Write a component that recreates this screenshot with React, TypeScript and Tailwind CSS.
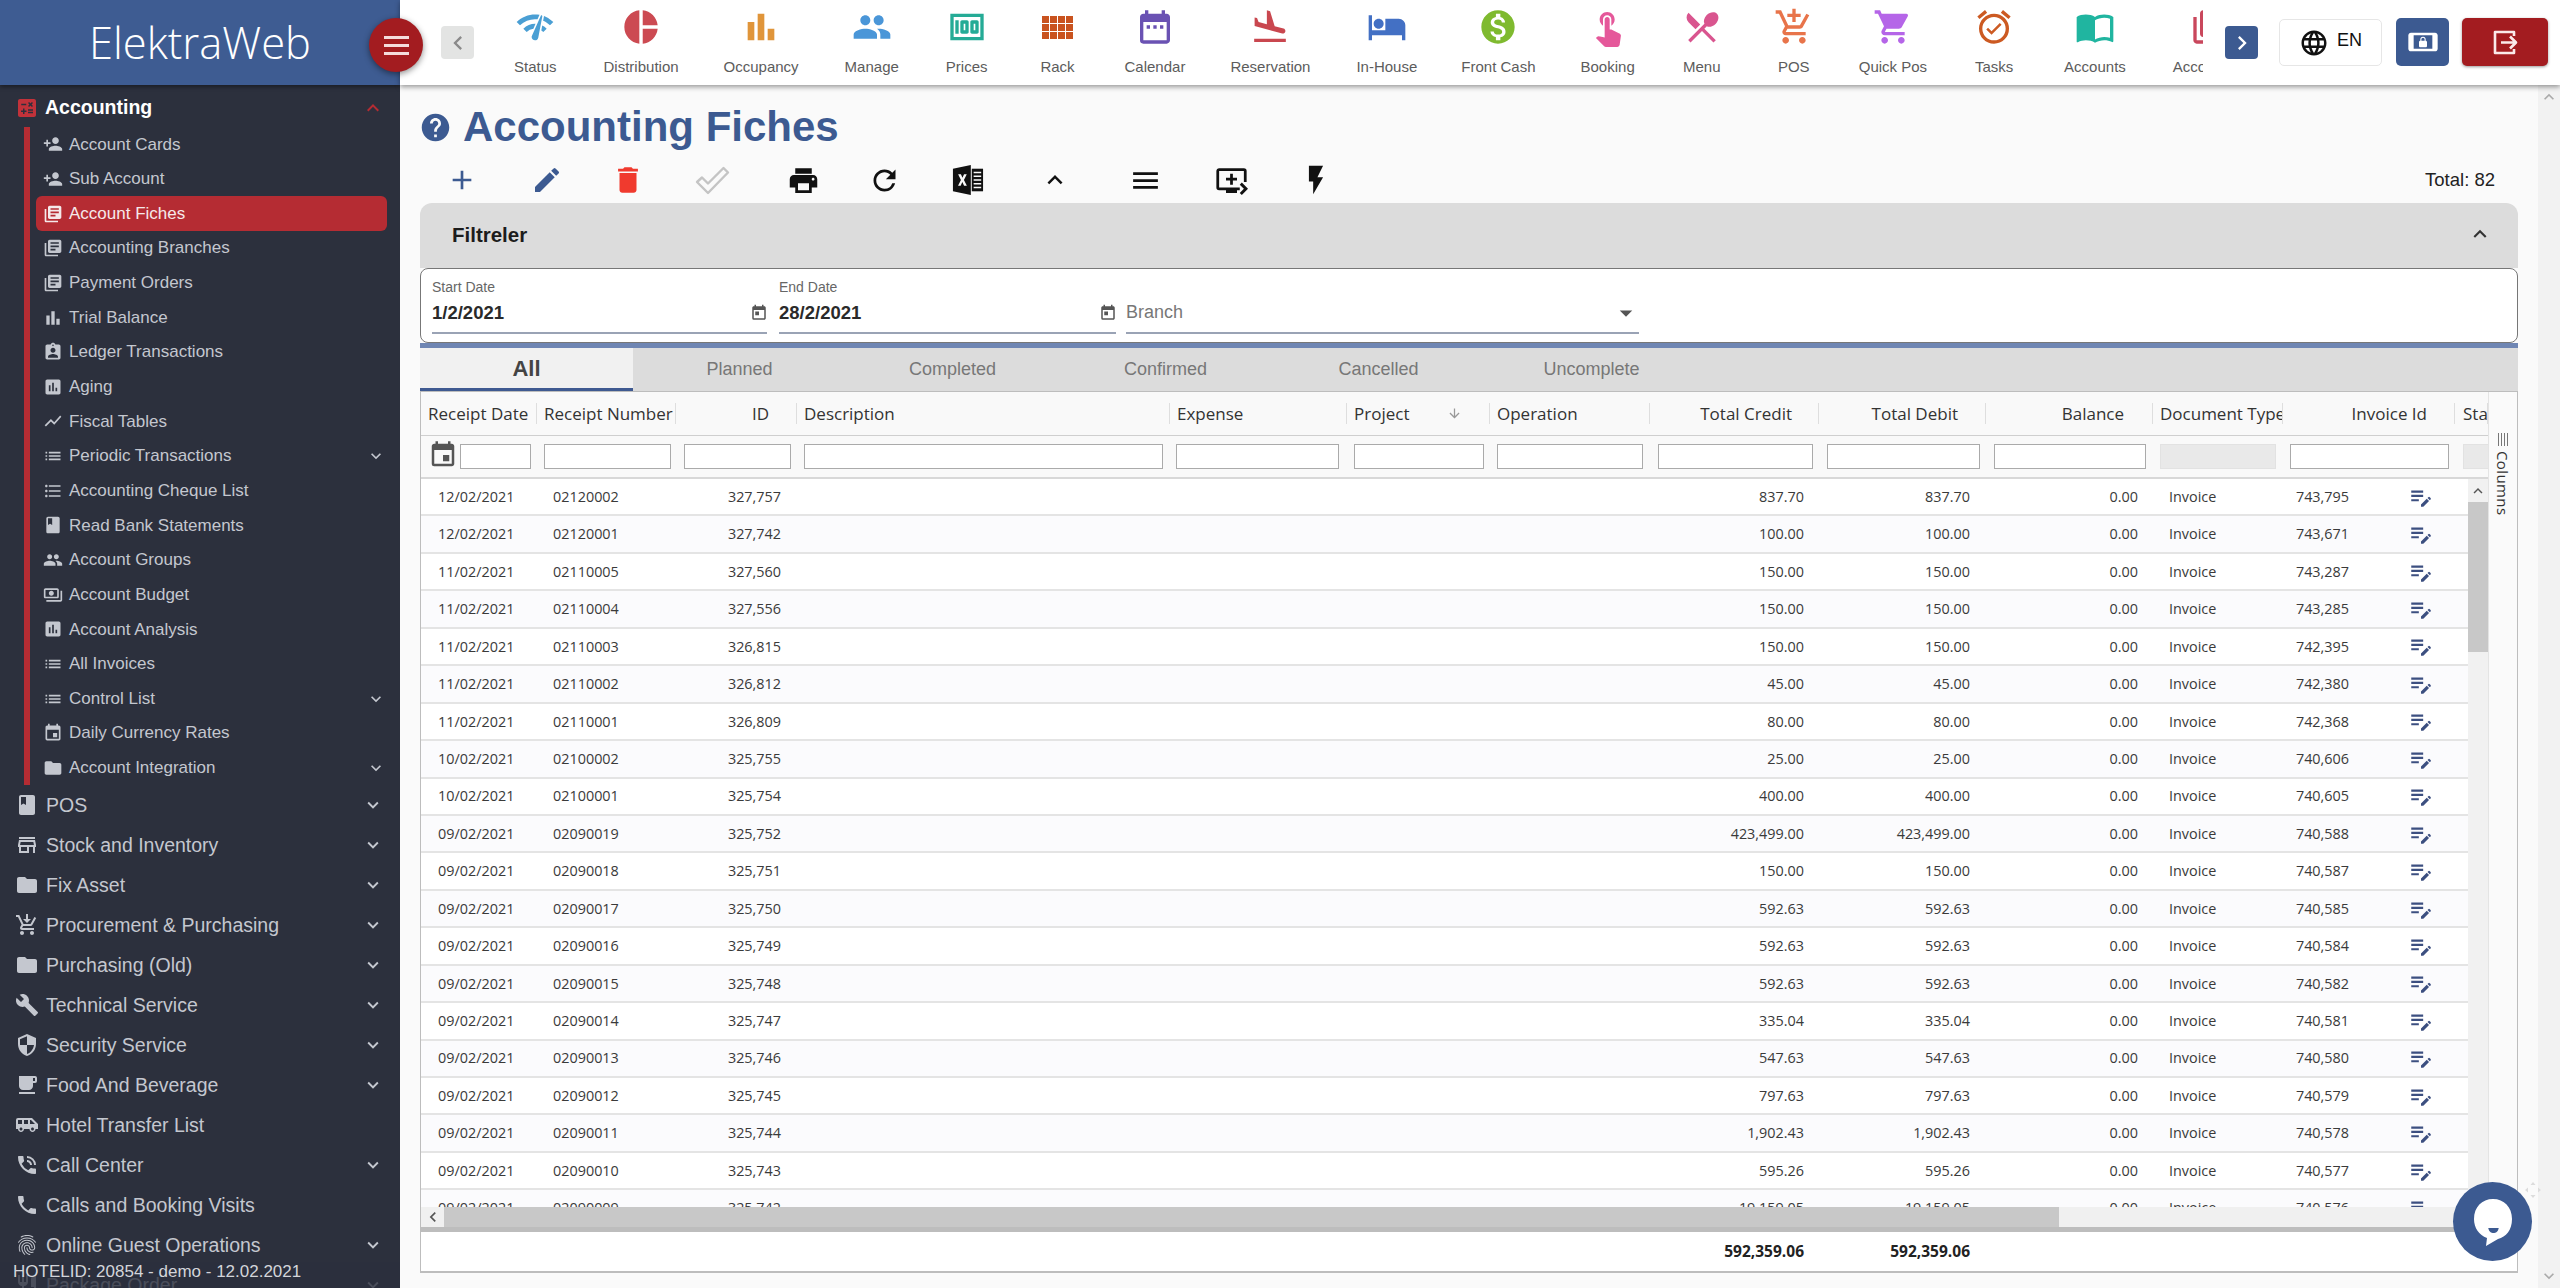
import React from "react";
import {
  MdNetworkCheck, MdPieChart, MdBarChart, MdPeople, MdMoney, MdDateRange, MdFlightLand, MdHotel,
  MdMonetizationOn, MdTouchApp, MdRestaurantMenu, MdOutlineAddShoppingCart, MdShoppingCart, MdAlarmOn, MdImportContacts,
  MdLibraryBooks, MdChevronLeft, MdChevronRight, MdLanguage, MdScreenLockLandscape, MdCalculate, MdExpandLess, MdExpandMore,
  MdPersonAdd, MdAssignmentInd, MdAssessment, MdShowChart, MdList, MdFormatListBulleted, MdBook, MdOutlinePayments, MdEvent,
  MdToday, MdFolder, MdOutlineStore, MdBuild, MdSecurity, MdLocalCafe, MdAirportShuttle, MdPhoneInTalk, MdPhone, MdFingerprint,
  MdAdd, MdEdit, MdDelete, MdPrint, MdRefresh, MdKeyboardArrowUp, MdMenu, MdQueuePlayNext, MdFlashOn, MdHelp,
  MdArrowDropDown, MdArrowDownward, MdEditNote, MdKeyboardArrowDown, MdOutlineRestaurant,
} from "react-icons/md";

const RackIcon = ({ size = 40, className }: { size?: number; className?: string }) => (
  <svg width={size} height={size} viewBox="0 0 40 40" fill="currentColor" className={className}>
    {[0, 1, 2, 3].map((i) =>
      [0, 1, 2].map((j) => <rect key={`${i}-${j}`} x={4 + 8 * i} y={9 + 8 * j} width="7" height="7" />)
    )}
  </svg>
);

const top = [
  { l: "Status", I: MdNetworkCheck, c: "text-[#4a9fd4]", o: "" },
  { l: "Distribution", I: MdPieChart, c: "text-[#cc4a52]", o: "" },
  { l: "Occupancy", I: MdBarChart, c: "text-[#e0953a]", o: "ml-[-2px]" },
  { l: "Manage", I: MdPeople, c: "text-[#4a96d8]", o: "ml-[-1px]" },
  { l: "Prices", I: MdMoney, c: "text-[#25ab96]", o: "" },
  { l: "Rack", I: RackIcon, c: "text-[#c9531f]", o: "ml-[3px]" },
  { l: "Calendar", I: MdDateRange, c: "text-[#6a52b3]", o: "" },
  { l: "Reservation", I: MdFlightLand, c: "text-[#c9474f]", o: "ml-[-2px]" },
  { l: "In-House", I: MdHotel, c: "text-[#4370c4]", o: "ml-[-1px]" },
  { l: "Front Cash", I: MdMonetizationOn, c: "text-[#7fba2f]", o: "ml-[-3px]" },
  { l: "Booking", I: MdTouchApp, c: "text-[#e5589a]", o: "ml-[-2px]" },
  { l: "Menu", I: MdRestaurantMenu, c: "text-[#d9558f]", o: "" },
  { l: "POS", I: MdOutlineAddShoppingCart, c: "text-[#e8744a]", o: "ml-[5px]" },
  { l: "Quick Pos", I: MdShoppingCart, c: "text-[#b565e8]", o: "ml-[-2px]" },
  { l: "Tasks", I: MdAlarmOn, c: "text-[#cc5a22]", o: "" },
  { l: "Accounts", I: MdImportContacts, c: "text-[#20b5a0]", o: "ml-[3px]" },
  { l: "Accounting", I: MdLibraryBooks, c: "text-[#c9475c]", o: "" },
];

const CartDown = ({ size = 24 }: { size?: number; className?: string }) => (
  <svg width={size} height={size} viewBox="0 0 24 24" fill="currentColor">
    <path d="M11 1h2v5h3l-4 4-4-4h3zM7 18c-1.1 0-1.99.9-1.99 2S5.9 22 7 22s2-.9 2-2-.9-2-2-2zm10 0c-1.1 0-1.99.9-1.99 2s.89 2 1.99 2 2-.9 2-2-.9-2-2-2zm-9.83-3.25l.03-.12.9-1.63h7.45c.75 0 1.41-.41 1.75-1.03l3.86-7.01L19.42 4h-.01l-1.1 2-2.76 5H8.53l-.13-.27L6.16 6l-.95-2-.94-2H1v2h2l3.6 7.59-1.35 2.45c-.16.28-.25.61-.25.96 0 1.1.9 2 2 2h12v-2H7.42c-.13 0-.25-.11-.25-.25z" />
  </svg>
);

const ExcelIcon = ({ size = 34 }: { size?: number }) => (
  <svg width={size} height={size} viewBox="0 0 34 34" fill="currentColor">
    <path d="M1 5 20 1v32L1 29z" />
    <path d="M21 5h12v24H21z" />
    <path d="M6.5 11h3l1.6 3.6L12.8 11h2.9l-3 6 3.1 6h-3l-1.8-3.8L9.2 23H6.4l3.1-6z" fill="#fafafa" />
    <path d="M23 9h8M23 13h8M23 17h8M23 21h8M23 25h8" stroke="#fafafa" strokeWidth="1.6" />
  </svg>
);

const CheckOutline = ({ size = 36 }: { size?: number }) => (
  <svg width={size} height={size} viewBox="0 0 36 36" fill="none" stroke="currentColor" strokeWidth="2.4" strokeLinejoin="round">
    <path d="M3 20l5-4.5 6 6L29.5 6 34 10.5 14 31z" />
  </svg>
);

const sub = [
  { l: "Account Cards", I: MdPersonAdd },
  { l: "Sub Account", I: MdPersonAdd },
  { l: "Account Fiches", I: MdLibraryBooks, a: true },
  { l: "Accounting Branches", I: MdLibraryBooks },
  { l: "Payment Orders", I: MdLibraryBooks },
  { l: "Trial Balance", I: MdBarChart },
  { l: "Ledger Transactions", I: MdAssignmentInd },
  { l: "Aging", I: MdAssessment },
  { l: "Fiscal Tables", I: MdShowChart },
  { l: "Periodic Transactions", I: MdList, m: true },
  { l: "Accounting Cheque List", I: MdFormatListBulleted },
  { l: "Read Bank Statements", I: MdBook },
  { l: "Account Groups", I: MdPeople },
  { l: "Account Budget", I: MdOutlinePayments },
  { l: "Account Analysis", I: MdAssessment },
  { l: "All Invoices", I: MdList },
  { l: "Control List", I: MdList, m: true },
  { l: "Daily Currency Rates", I: MdEvent },
  { l: "Account Integration", I: MdFolder, m: true },
];

const mods = [
  { l: "POS", I: MdBook, m: true },
  { l: "Stock and Inventory", I: MdOutlineStore, m: true },
  { l: "Fix Asset", I: MdFolder, m: true },
  { l: "Procurement & Purchasing", I: CartDown, m: true },
  { l: "Purchasing (Old)", I: MdFolder, m: true },
  { l: "Technical Service", I: MdBuild, m: true },
  { l: "Security Service", I: MdSecurity, m: true },
  { l: "Food And Beverage", I: MdLocalCafe, m: true },
  { l: "Hotel Transfer List", I: MdAirportShuttle },
  { l: "Call Center", I: MdPhoneInTalk, m: true },
  { l: "Calls and Booking Visits", I: MdPhone },
  { l: "Online Guest Operations", I: MdFingerprint, m: true },
  { l: "Package Order", I: MdOutlineRestaurant, m: true },
];

const tools = [
  { I: MdAdd, s: 32, c: "text-[#3c5a91] ml-[22px]" },
  { I: MdEdit, s: 32, c: "text-[#3c5a91] ml-[45px]" },
  { I: MdDelete, s: 34, c: "text-[#f03a2e] ml-[41px]" },
  { I: CheckOutline, s: 36, c: "text-[#c4c4c4] ml-[44px]" },
  { I: MdPrint, s: 33, c: "text-[#111] ml-[51px]" },
  { I: MdRefresh, s: 33, c: "text-[#111] ml-[41px]" },
  { I: ExcelIcon, s: 32, c: "text-[#111] ml-[44px]" },
  { I: MdKeyboardArrowUp, s: 30, c: "text-[#111] ml-[47px]" },
  { I: MdMenu, s: 33, c: "text-[#111] ml-[50px]" },
  { I: MdQueuePlayNext, s: 33, c: "text-[#111] ml-[46px]" },
  { I: MdFlashOn, s: 34, c: "text-[#111] ml-[45px]" },
];

const tabs = ["All", "Planned", "Completed", "Confirmed", "Cancelled", "Uncomplete"];

const COLS = "grid-cols-[116px_139px_121px_373px_177px_143px_160px_169px_167px_167px_130px_172px_33px]";

const head = [
  { t: "Receipt Date", c: "pl-[7px]" },
  { t: "Receipt Number", c: "pl-[7px]" },
  { t: "ID", c: "justify-end pr-[27px]" },
  { t: "Description", c: "pl-[7px]" },
  { t: "Expense", c: "pl-[7px]" },
  { t: "Project", c: "pl-[7px]" },
  { t: "Operation", c: "pl-[7px]" },
  { t: "Total Credit", c: "justify-end pr-[26px]" },
  { t: "Total Debit", c: "justify-end pr-[27px]" },
  { t: "Balance", c: "justify-end pr-[28px]" },
  { t: "Document Type", c: "pl-[7px]" },
  { t: "Invoice Id", c: "justify-end pr-[27px]" },
  { t: "Status", c: "pl-[8px]" },
];

const filters = [
  { c: "ml-[39px] w-[71px]" },
  { c: "ml-[13px] w-[127px]" },
  { c: "ml-[13px] w-[107px]" },
  { c: "ml-[13px] w-[359px]" },
  { c: "ml-[13px] w-[163px]" },
  { c: "ml-[15px] w-[130px]" },
  { c: "ml-[13px] w-[146px]" },
  { c: "ml-[15px] w-[155px]" },
  { c: "ml-[14px] w-[153px]" },
  { c: "ml-[14px] w-[152px]" },
  { c: "ml-[14px] w-[116px]", d: true },
  { c: "ml-[14px] w-[159px]" },
  { c: "ml-[14px] w-[40px]", d: true },
];

const rows: [string, string, string, string, string][] = [
  ["12/02/2021", "02120002", "327,757", "837.70", "743,795"],
  ["12/02/2021", "02120001", "327,742", "100.00", "743,671"],
  ["11/02/2021", "02110005", "327,560", "150.00", "743,287"],
  ["11/02/2021", "02110004", "327,556", "150.00", "743,285"],
  ["11/02/2021", "02110003", "326,815", "150.00", "742,395"],
  ["11/02/2021", "02110002", "326,812", "45.00", "742,380"],
  ["11/02/2021", "02110001", "326,809", "80.00", "742,368"],
  ["10/02/2021", "02100002", "325,755", "25.00", "740,606"],
  ["10/02/2021", "02100001", "325,754", "400.00", "740,605"],
  ["09/02/2021", "02090019", "325,752", "423,499.00", "740,588"],
  ["09/02/2021", "02090018", "325,751", "150.00", "740,587"],
  ["09/02/2021", "02090017", "325,750", "592.63", "740,585"],
  ["09/02/2021", "02090016", "325,749", "592.63", "740,584"],
  ["09/02/2021", "02090015", "325,748", "592.63", "740,582"],
  ["09/02/2021", "02090014", "325,747", "335.04", "740,581"],
  ["09/02/2021", "02090013", "325,746", "547.63", "740,580"],
  ["09/02/2021", "02090012", "325,745", "797.63", "740,579"],
  ["09/02/2021", "02090011", "325,744", "1,902.43", "740,578"],
  ["09/02/2021", "02090010", "325,743", "595.26", "740,577"],
  ["09/02/2021", "02090009", "325,742", "19,159.05", "740,576"],
];

export default function App() {
  return (
    <div className="w-[2560px] h-[1288px] flex overflow-hidden bg-[#fafafa] font-['Liberation_Sans',Arial,sans-serif] relative">
      {/* Sidebar */}
      <aside className="w-[400px] h-full shrink-0 flex flex-col bg-[#2c303d] relative overflow-hidden">
        <div className="h-[85px] shrink-0 bg-[#3e5c92] shadow-[0_2px_4px_rgba(0,0,0,0.4)] flex items-center pl-[89px] relative z-10">
          <span className="text-white text-[43.5px] font-light font-['Open_Sans',sans-serif] leading-none">ElektraWeb</span>
        </div>
        <div className="h-[42px] shrink-0 flex items-center pl-[15px] pt-[3px]">
          <MdCalculate size={24} className="text-[#c2323a]" />
          <span className="ml-[6px] text-white font-bold text-[19.5px]">Accounting</span>
          <MdExpandLess size={24} className="ml-auto mr-[15px] text-[#b52c33]" />
        </div>
        <div className="ml-[24px] border-l-[6px] border-[#b52c33] w-[370px] shrink-0">
          {sub.map((s) => (
            <div
              key={s.l}
              className={`h-[34.65px] ml-[6px] w-[351px] flex items-center pl-[7px] rounded-[6px] text-[17px] ${s.a ? "bg-[#b52c33] text-[#f5e9ea]" : "text-[#c4c7cf]"}`}
            >
              <s.I size={20} className="shrink-0" />
              <span className="ml-[6px]">{s.l}</span>
              {s.m && <MdExpandMore size={20} className="ml-auto mr-[1px]" />}
            </div>
          ))}
        </div>
        {mods.map((m) => (
          <div key={m.l} className="h-[40px] shrink-0 flex items-center pl-[15px] text-[#c4c7cf] text-[19.5px]">
            <m.I size={24} className="shrink-0" />
            <span className="ml-[7px]">{m.l}</span>
            {m.m && <MdExpandMore size={22} className="ml-auto mr-[16px]" />}
          </div>
        ))}
        <div className="absolute left-0 right-0 bottom-0 h-[26px] bg-[#2c303d]/80 flex items-start pl-[13px] text-[#d3d5da] text-[17px] leading-[20px]">
          HOTELID: 20854 - demo - 12.02.2021
        </div>
      </aside>

      {/* Menu round button */}
      <div className="absolute left-[369px] top-[18px] w-[54px] h-[54px] rounded-full bg-[#a31c20] shadow-[0_2px_6px_rgba(0,0,0,0.45)] flex flex-col items-center justify-center gap-[5px] z-30">
        <span className="block w-[25px] h-[3px] bg-[#f5dcdc]" />
        <span className="block w-[25px] h-[3px] bg-[#f5dcdc]" />
        <span className="block w-[25px] h-[3px] bg-[#f5dcdc]" />
      </div>

      {/* Main */}
      <div className="flex-1 min-w-0 h-full flex flex-col">
        {/* Top bar */}
        <div className="h-[85px] shrink-0 bg-white shadow-[0_2px_5px_rgba(0,0,0,0.4)] flex items-start relative z-20">
          <div className="ml-[41px] mt-[26px] w-[33px] h-[33px] shrink-0 rounded-[4px] bg-[#e3e4e3] flex items-center justify-center text-[#8a8a8a]">
            <MdChevronLeft size={28} />
          </div>
          <div className="ml-[40px] w-[1689px] h-full overflow-hidden flex gap-[47px] shrink-0">
            {top.map((t) => (
              <div key={t.l} className={`flex flex-col items-center shrink-0 pt-[7px] ${t.o}`}>
                <t.I size={40} className={t.c} />
                <span className="mt-[11px] text-[15px] leading-[18px] text-[#5c5c5c]">{t.l}</span>
              </div>
            ))}
          </div>
          <div className="ml-[22px] mt-[26px] w-[33px] h-[33px] shrink-0 rounded-[4px] bg-[#3c5a91] flex items-center justify-center text-white">
            <MdChevronRight size={28} />
          </div>
          <div className="ml-[21px] mt-[19px] w-[103px] h-[47px] shrink-0 rounded-[5px] border border-[#e6e6e6] bg-white flex items-center justify-center gap-[8px] text-[#111]">
            <MdLanguage size={30} />
            <span className="text-[18px] -mt-[4px]">EN</span>
          </div>
          <div className="ml-[14px] mt-[18px] w-[53px] h-[48px] shrink-0 rounded-[5px] bg-[#3c5a91] flex items-center justify-center text-white">
            <MdScreenLockLandscape size={32} />
          </div>
          <div className="ml-[13px] mt-[18px] w-[86px] h-[48px] shrink-0 rounded-[5px] bg-[#a31c20] shadow-[0_1px_3px_rgba(0,0,0,0.4)] flex items-center justify-center text-[#fbeaea]">
            <svg width="28" height="28" viewBox="0 0 28 28" fill="none" stroke="currentColor" strokeWidth="2.6" strokeLinejoin="round">
              <path d="M23 8V4H4v21h19v-4" />
              <path d="M10 14.5h15M19 8.5l6 6-6 6" />
            </svg>
          </div>
        </div>

        <div className="flex-1 min-h-0 flex">
          {/* Content */}
          <div className="w-[2138px] shrink-0 px-[20px] flex flex-col min-h-0">
            <div className="h-[60px] mt-[12px] shrink-0 flex items-center">
              <MdHelp size={33} className="text-[#3c5a91] -ml-[1px]" />
              <h1 className="ml-[11px] text-[42px] leading-none font-bold text-[#3c5a91]">Accounting Fiches</h1>
            </div>
            <div className="h-[46px] shrink-0 flex items-center">
              {tools.map((t, i) => (
                <div key={i} className={`w-[40px] h-[40px] flex items-center justify-center shrink-0 ${t.c}`}>
                  <t.I size={t.s} />
                </div>
              ))}
              <span className="ml-auto mr-[23px] mb-[1px] text-[18.5px] text-[#222]">Total: 82</span>
            </div>

            {/* Filter */}
            <div className="h-[65px] shrink-0 bg-[#dcdcdc] rounded-t-[12px] flex items-center pl-[32px] pr-[25px]">
              <span className="text-[20.5px] font-bold text-[#1c1c1c]">Filtreler</span>
              <MdKeyboardArrowUp size={26} className="ml-auto mb-[4px] text-[#333]" />
            </div>
            <div className="h-[75px] shrink-0 bg-white border border-[#777] rounded-[8px] flex pl-[11px]">
              <div className="w-[335px] pt-[10px] border-b-2 border-[#9aa3b5] h-[65px] flex flex-col">
                <span className="text-[14px] leading-[16px] text-[#666]">Start Date</span>
                <div className="mt-[8px] flex items-center text-[#2a2a2a] text-[18.5px] leading-[20px] font-bold">
                  1/2/2021
                  <MdToday size={18} className="ml-auto mr-[-1px] text-[#555]" />
                </div>
              </div>
              <div className="ml-[12px] w-[337px] pt-[10px] border-b-2 border-[#9aa3b5] h-[65px] flex flex-col">
                <span className="text-[14px] leading-[16px] text-[#666]">End Date</span>
                <div className="mt-[8px] flex items-center text-[#2a2a2a] text-[18.5px] leading-[20px] font-bold">
                  28/2/2021
                  <MdToday size={18} className="ml-auto mr-[-1px] text-[#555]" />
                </div>
              </div>
              <div className="ml-[10px] w-[513px] border-b-2 border-[#9aa3b5] h-[65px] flex items-center pt-[24px] text-[18px] text-[#777]">
                Branch
                <MdArrowDropDown size={30} className="ml-auto -mr-[2px] text-[#555]" />
              </div>
            </div>
            <div className="h-[5px] shrink-0 bg-[#6f86b3]" />

            {/* Tabs */}
            <div className="h-[43px] shrink-0 bg-[#dcdcdc] flex">
              {tabs.map((t, i) => (
                <div
                  key={t}
                  className={`w-[213px] flex items-center justify-center ${i === 0 ? "bg-[#f1f1f1] border-b-[3px] border-[#3f5a91] text-[22px] font-bold text-[#444]" : "text-[18px] text-[#777]"}`}
                >
                  {t}
                </div>
              ))}
            </div>

            {/* Grid */}
            <div className="h-[882px] shrink-0 bg-white border-x border-t border-b-2 border-[#bdbdbd] flex flex-col font-['Open_Sans',sans-serif]">
              <div className="flex h-[815px] shrink-0">
                <div className="w-[2067px] shrink-0 flex flex-col">
                  <div className={`h-[44px] shrink-0 grid ${COLS} bg-[#f9f9f9] border-b border-[#cfcfcf] overflow-hidden`}>
                    {head.map((h, i) => (
                      <div key={h.t} className="relative flex items-center overflow-hidden">
                        <div className={`w-full h-[21px] flex items-center whitespace-nowrap overflow-hidden text-[17px] font-medium text-[#333] border-r border-[#dedede] ${h.c}`}>
                          {h.t}
                          {i === 5 && <MdArrowDownward size={15} className="ml-[38px] text-[#999]" />}
                        </div>
                      </div>
                    ))}
                  </div>
                  <div className="h-[43px] shrink-0 flex items-center bg-[#f9f9f9] border-b-2 border-[#d8d8d8] relative overflow-hidden">
                    <MdEvent size={30} className="absolute left-[7px] top-[4px] text-[#555]" />
                    {filters.map((f, i) => (
                      <div
                        key={i}
                        className={`h-[25px] shrink-0 ${f.c} ${f.d ? "bg-[#e9e9e9] border border-[#e2e2e2]" : "bg-white border border-[#aaa]"}`}
                      />
                    ))}
                  </div>
                  <div className="flex flex-1 min-h-0">
                    <div className="w-[2047px] shrink-0 overflow-hidden">
                      <div className="w-[2067px]">
                        {rows.map((r, i) => (
                          <div
                            key={r[1]}
                            className={`h-[37.45px] grid ${COLS} items-center border-b-2 border-[#e4e4e4] text-[14.4px] text-[#3a3a3a] ${i % 2 ? "bg-[#fbfbfd]" : "bg-white"}`}
                          >
                            <div className="pl-[17px]">{r[0]}</div>
                            <div className="pl-[16px]">{r[1]}</div>
                            <div className="text-right pr-[16px]">{r[2]}</div>
                            <div />
                            <div />
                            <div />
                            <div />
                            <div className="text-right pr-[15px]">{r[3]}</div>
                            <div className="text-right pr-[16px]">{r[3]}</div>
                            <div className="text-right pr-[15px]">0.00</div>
                            <div className="pl-[16px]">Invoice</div>
                            <div className="flex items-center justify-end pr-[21px]">
                              {r[4]}
                              <MdEditNote size={26} className="ml-[59px] text-[#3c4f80]" />
                            </div>
                            <div />
                          </div>
                        ))}
                      </div>
                    </div>
                    <div className="w-[20px] shrink-0 bg-[#f1f1f1] flex flex-col">
                      <div className="h-[23px] flex items-center justify-center text-[#555]">
                        <MdKeyboardArrowUp size={18} />
                      </div>
                      <div className="h-[150px] bg-[#c8c8c8]" />
                    </div>
                  </div>
                </div>
                <div className="w-[29px] shrink-0 bg-[#fafafa] border-l border-[#e4e4e4] flex flex-col items-center pt-[41px]">
                  <svg width="12" height="13" viewBox="0 0 12 13" stroke="#777" strokeWidth="1">
                    <path d="M1.5 0v13M4.5 0v13M7.5 0v13M10.5 0v13" />
                  </svg>
                  <span className="mt-[5px] [writing-mode:vertical-rl] text-[15px] tracking-[0.4px] text-[#333]">Columns</span>
                </div>
              </div>
              <div className="h-[20px] shrink-0 flex bg-[#f0f0f0]">
                <div className="w-[23px] flex items-center justify-center text-[#555]">
                  <MdChevronLeft size={20} />
                </div>
                <div className="w-[1615px] bg-[#c8c8c8]" />
              </div>
              <div className="h-[5px] shrink-0 bg-[#bdbdbd]" />
              <div className={`h-[37px] shrink-0 grid ${COLS} items-center text-[15.5px] font-bold text-[#222] pt-[3px]`}>
                <div />
                <div />
                <div />
                <div />
                <div />
                <div />
                <div />
                <div className="text-right pr-[15px]">592,359.06</div>
                <div className="text-right pr-[16px]">592,359.06</div>
              </div>
            </div>
          </div>

          {/* Page scrollbar */}
          <div className="w-[22px] shrink-0 bg-[#f2f2f2] flex flex-col items-center justify-between py-[2px] text-[#aaa]">
            <MdKeyboardArrowUp size={20} />
            <MdKeyboardArrowDown size={20} />
          </div>
        </div>
      </div>

      {/* Chat widget */}
      <div className="absolute left-[2453px] top-[1182px] w-[79px] h-[79px] rounded-full bg-[#3c5a91] flex items-center justify-center z-30">
        <svg width="44" height="50" viewBox="0 0 44 50">
          <path d="M22 2C33 2 41 10 41 22c0 11-6 18-14 20l-12 7 1-8C8 38 3 31 3 22 3 10 11 2 22 2z" fill="#fff" />
          <path d="M15 31h14c-1 4-4 5-7 5s-6-1-7-5z" fill="#3c5a91" transform="translate(6 0) scale(0.75 1)" />
        </svg>
      </div>
      <div className="absolute left-[2525px] top-[1182px] w-[16px] h-[16px] z-30 text-[#dcdcdc]">
        <svg width="16" height="16" viewBox="0 0 16 16" fill="currentColor">
          <path d="M8 0l2.5 3h-5zM8 16l-2.5-3h5zM0 8l3-2.5v5zM16 8l-3 2.5v-5z" />
        </svg>
      </div>
    </div>
  );
}
